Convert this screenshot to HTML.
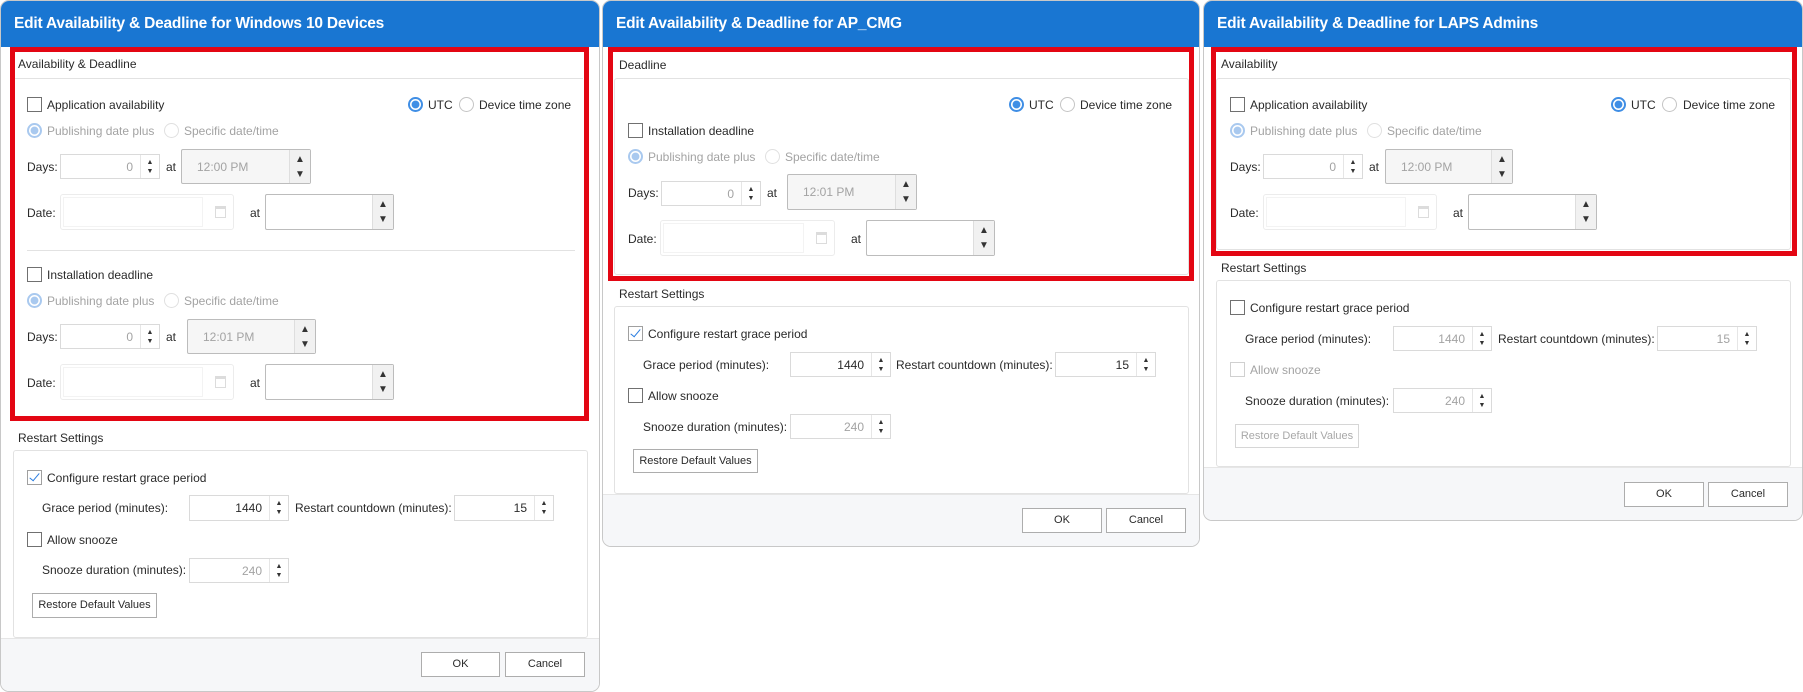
<!DOCTYPE html>
<html><head><meta charset="utf-8">
<style>
*{box-sizing:border-box;margin:0;padding:0}
body{width:1803px;height:692px;background:#fff;position:relative;overflow:hidden;font-family:"Liberation Sans",sans-serif}
.dlg{position:absolute;top:0;background:#fff;border:1px solid #c8c8c8;border-radius:9px;overflow:hidden}
.tb{position:absolute;left:0;top:0;right:0;height:46px;background:#1976d2}
.tt{position:absolute;left:13px;top:13px;color:#fff;font:bold 15.5px/19px "Liberation Sans",sans-serif;letter-spacing:-0.2px;white-space:nowrap}
.red{position:absolute;border:5px solid #e30613}
.ln{position:absolute;height:1px;background:#e2e2e2}
.grp{position:absolute;border:1px solid #e2e2e2;border-radius:3px}
.t{position:absolute;font-size:12px;line-height:14px;color:#2a2a2a;white-space:nowrap}
.g{color:#a3a3a3}
.cb{position:absolute;width:15px;height:15px;border:1px solid #707070;background:#fff}
.cb.dis{border-color:#d0d0d0}
.cb.on{border-color:#a0a0a0}
.cb.on::after{content:"";position:absolute;left:4px;top:0px;width:4px;height:9px;border:solid #2b7de0;border-width:0 1.6px 1.6px 0;transform:rotate(40deg)}
.rd{position:absolute;width:15px;height:15px;border:1px solid #c4c4c4;border-radius:50%;background:#fff}
.rd.on{border:2px solid #3f8ee5;background:radial-gradient(circle,#3f8ee5 0 3.6px,#fff 4.2px)}
.rd.don{border:2px solid #a9c9ef;background:radial-gradient(circle,#a9c9ef 0 3.6px,#fff 4.2px)}
.rd.dis{border-color:#e0e0e0}
.sp{position:absolute;border:1px solid #dadada;background:#fff}
.sp .v{position:absolute;right:26px;top:50%;transform:translateY(-50%);font-size:12px;color:#2a2a2a}
.sp .v.g{color:#a3a3a3}
.sp .ar{position:absolute;right:0;top:0;bottom:0;width:19px;border-left:1px solid #e6e6e6;font-size:7px;line-height:9px;text-align:center;color:#333;padding-top:3px}
.tm{position:absolute;border:1px solid #bcbcbc;background:#f6f6f6;border-radius:2px}
.tm .v{position:absolute;left:15px;top:50%;transform:translateY(-50%);font-size:12px;color:#a3a3a3}
.tm .ar{position:absolute;right:0;top:0;bottom:0;width:21px;border-left:1px solid #dedede;background:#f1f1f1;font-size:10px;line-height:15px;text-align:center;color:#333;padding-top:2px}
.dt{position:absolute;border:1px solid #ececec;border-radius:3px;background:#fff}
.dt .in{position:absolute;left:2px;top:2px;bottom:2px;right:30px;border:1px solid #f3f3f3}
.dt .ic{position:absolute;right:7px;top:50%;margin-top:-6px;width:11px;height:12px;border:1px solid #dcdcdc;border-top-width:3px}
.bt{position:absolute;border:1px solid #adadad;background:#fff;font-size:11px;color:#2a2a2a;text-align:center}
.bt.dis{border-color:#d6d6d6;color:#a8a8a8}
.ft{position:absolute;left:0;right:0;bottom:0;background:#f6f7f9;border-top:1px solid #e6e6e6}
</style></head><body>

<!-- Dialog 1 -->
<div class="dlg" style="left:0;width:600px;height:692px">
 <div class="tb"></div><div class="tt">Edit Availability &amp; Deadline for Windows 10 Devices</div>
 <div class="ln" style="left:14px;top:77px;width:568px"></div>
 <div class="t" style="left:17px;top:56px">Availability &amp; Deadline</div>
 <div class="cb" style="left:26px;top:96px"></div><div class="t" style="left:46px;top:97px">Application availability</div>
 <div class="rd on" style="left:407px;top:96px"></div><div class="t" style="left:427px;top:97px">UTC</div>
 <div class="rd" style="left:458px;top:96px"></div><div class="t" style="left:478px;top:97px">Device time zone</div>
 <div class="rd don" style="left:26px;top:122px"></div><div class="t g" style="left:46px;top:123px">Publishing date plus</div>
 <div class="rd dis" style="left:163px;top:122px"></div><div class="t g" style="left:183px;top:123px">Specific date/time</div>
 <div class="t" style="left:26px;top:159px">Days:</div>
 <div class="sp" style="left:59px;top:153px;width:100px;height:25px"><span class="v g">0</span><div class="ar">▲<br>▼</div></div>
 <div class="t" style="left:165px;top:159px">at</div>
 <div class="tm" style="left:180px;top:148px;width:130px;height:35px"><span class="v">12:00 PM</span><div class="ar">▲<br>▼</div></div>
 <div class="t" style="left:26px;top:205px">Date:</div>
 <div class="dt" style="left:59px;top:193px;width:174px;height:36px"><div class="in"></div><div class="ic"></div></div>
 <div class="t" style="left:249px;top:205px">at</div>
 <div class="tm" style="left:264px;top:193px;width:129px;height:36px;background:#fff"><div class="ar">▲<br>▼</div></div>
 <div class="ln" style="left:26px;top:249px;width:548px"></div>
 <div class="cb" style="left:26px;top:266px"></div><div class="t" style="left:46px;top:267px">Installation deadline</div>
 <div class="rd don" style="left:26px;top:292px"></div><div class="t g" style="left:46px;top:293px">Publishing date plus</div>
 <div class="rd dis" style="left:163px;top:292px"></div><div class="t g" style="left:183px;top:293px">Specific date/time</div>
 <div class="t" style="left:26px;top:329px">Days:</div>
 <div class="sp" style="left:59px;top:323px;width:100px;height:25px"><span class="v g">0</span><div class="ar">▲<br>▼</div></div>
 <div class="t" style="left:165px;top:329px">at</div>
 <div class="tm" style="left:186px;top:318px;width:129px;height:35px"><span class="v">12:01 PM</span><div class="ar">▲<br>▼</div></div>
 <div class="t" style="left:26px;top:375px">Date:</div>
 <div class="dt" style="left:59px;top:363px;width:174px;height:36px"><div class="in"></div><div class="ic"></div></div>
 <div class="t" style="left:249px;top:375px">at</div>
 <div class="tm" style="left:264px;top:363px;width:129px;height:36px;background:#fff"><div class="ar">▲<br>▼</div></div>
 <div class="red" style="left:9px;top:46px;width:579px;height:374px"></div>
 <div class="t" style="left:17px;top:430px">Restart Settings</div>
 <div class="grp" style="left:12px;top:449px;width:575px;height:188px"></div>
 <div class="cb on" style="left:26px;top:469px"></div><div class="t" style="left:46px;top:470px">Configure restart grace period</div>
 <div class="t" style="left:41px;top:500px">Grace period (minutes):</div>
 <div class="sp" style="left:188px;top:494px;width:100px;height:26px"><span class="v">1440</span><div class="ar">▲<br>▼</div></div>
 <div class="t" style="left:294px;top:500px">Restart countdown (minutes):</div>
 <div class="sp" style="left:453px;top:494px;width:100px;height:26px"><span class="v">15</span><div class="ar">▲<br>▼</div></div>
 <div class="cb" style="left:26px;top:531px"></div><div class="t" style="left:46px;top:532px">Allow snooze</div>
 <div class="t" style="left:41px;top:562px">Snooze duration (minutes):</div>
 <div class="sp" style="left:188px;top:557px;width:100px;height:25px"><span class="v g">240</span><div class="ar">▲<br>▼</div></div>
 <div class="bt" style="left:31px;top:592px;width:125px;height:25px;line-height:23px">Restore Default Values</div>
 <div class="ft" style="top:637px"></div>
 <div class="bt" style="left:420px;top:651px;width:79px;height:25px;line-height:23px">OK</div>
 <div class="bt" style="left:504px;top:651px;width:80px;height:25px;line-height:23px">Cancel</div>
</div>

<!-- Dialog 2 -->
<div class="dlg" style="left:602px;width:598px;height:547px">
 <div class="tb"></div><div class="tt">Edit Availability &amp; Deadline for AP_CMG</div>
 <div class="t" style="left:16px;top:57px">Deadline</div>
 <div class="grp" style="left:11px;top:77px;width:575px;height:197px"></div>
 <div class="rd on" style="left:406px;top:96px"></div><div class="t" style="left:426px;top:97px">UTC</div>
 <div class="rd" style="left:457px;top:96px"></div><div class="t" style="left:477px;top:97px">Device time zone</div>
 <div class="cb" style="left:25px;top:122px"></div><div class="t" style="left:45px;top:123px">Installation deadline</div>
 <div class="rd don" style="left:25px;top:148px"></div><div class="t g" style="left:45px;top:149px">Publishing date plus</div>
 <div class="rd dis" style="left:162px;top:148px"></div><div class="t g" style="left:182px;top:149px">Specific date/time</div>
 <div class="t" style="left:25px;top:185px">Days:</div>
 <div class="sp" style="left:58px;top:180px;width:100px;height:25px"><span class="v g">0</span><div class="ar">▲<br>▼</div></div>
 <div class="t" style="left:164px;top:185px">at</div>
 <div class="tm" style="left:184px;top:173px;width:130px;height:36px"><span class="v">12:01 PM</span><div class="ar">▲<br>▼</div></div>
 <div class="t" style="left:25px;top:231px">Date:</div>
 <div class="dt" style="left:57px;top:219px;width:175px;height:36px"><div class="in"></div><div class="ic"></div></div>
 <div class="t" style="left:248px;top:231px">at</div>
 <div class="tm" style="left:263px;top:219px;width:129px;height:36px;background:#fff"><div class="ar">▲<br>▼</div></div>
 <div class="red" style="left:5px;top:46px;width:586px;height:234px"></div>
 <div class="t" style="left:16px;top:286px">Restart Settings</div>
 <div class="grp" style="left:11px;top:305px;width:575px;height:188px"></div>
 <div class="cb on" style="left:25px;top:325px"></div><div class="t" style="left:45px;top:326px">Configure restart grace period</div>
 <div class="t" style="left:40px;top:357px">Grace period (minutes):</div>
 <div class="sp" style="left:187px;top:351px;width:101px;height:25px"><span class="v">1440</span><div class="ar">▲<br>▼</div></div>
 <div class="t" style="left:293px;top:357px">Restart countdown (minutes):</div>
 <div class="sp" style="left:452px;top:351px;width:101px;height:25px"><span class="v">15</span><div class="ar">▲<br>▼</div></div>
 <div class="cb" style="left:25px;top:387px"></div><div class="t" style="left:45px;top:388px">Allow snooze</div>
 <div class="t" style="left:40px;top:419px">Snooze duration (minutes):</div>
 <div class="sp" style="left:187px;top:413px;width:101px;height:25px"><span class="v g">240</span><div class="ar">▲<br>▼</div></div>
 <div class="bt" style="left:30px;top:448px;width:125px;height:24px;line-height:22px">Restore Default Values</div>
 <div class="ft" style="top:493px"></div>
 <div class="bt" style="left:419px;top:507px;width:80px;height:25px;line-height:23px">OK</div>
 <div class="bt" style="left:503px;top:507px;width:80px;height:25px;line-height:23px">Cancel</div>
</div>

<!-- Dialog 3 -->
<div class="dlg" style="left:1203px;width:600px;height:521px">
 <div class="tb"></div><div class="tt">Edit Availability &amp; Deadline for LAPS Admins</div>
 <div class="t" style="left:17px;top:56px">Availability</div>
 <div class="grp" style="left:12px;top:77px;width:575px;height:172px"></div>
 <div class="cb" style="left:26px;top:96px"></div><div class="t" style="left:46px;top:97px">Application availability</div>
 <div class="rd on" style="left:407px;top:96px"></div><div class="t" style="left:427px;top:97px">UTC</div>
 <div class="rd" style="left:458px;top:96px"></div><div class="t" style="left:479px;top:97px">Device time zone</div>
 <div class="rd don" style="left:26px;top:122px"></div><div class="t g" style="left:46px;top:123px">Publishing date plus</div>
 <div class="rd dis" style="left:163px;top:122px"></div><div class="t g" style="left:183px;top:123px">Specific date/time</div>
 <div class="t" style="left:26px;top:159px">Days:</div>
 <div class="sp" style="left:59px;top:153px;width:100px;height:25px"><span class="v g">0</span><div class="ar">▲<br>▼</div></div>
 <div class="t" style="left:165px;top:159px">at</div>
 <div class="tm" style="left:181px;top:148px;width:128px;height:35px"><span class="v">12:00 PM</span><div class="ar">▲<br>▼</div></div>
 <div class="t" style="left:26px;top:205px">Date:</div>
 <div class="dt" style="left:59px;top:193px;width:174px;height:36px"><div class="in"></div><div class="ic"></div></div>
 <div class="t" style="left:249px;top:205px">at</div>
 <div class="tm" style="left:264px;top:193px;width:129px;height:36px;background:#fff"><div class="ar">▲<br>▼</div></div>
 <div class="red" style="left:7px;top:46px;width:586px;height:209px"></div>
 <div class="t" style="left:17px;top:260px">Restart Settings</div>
 <div class="grp" style="left:12px;top:279px;width:575px;height:187px"></div>
 <div class="cb" style="left:26px;top:299px"></div><div class="t" style="left:46px;top:300px">Configure restart grace period</div>
 <div class="t" style="left:41px;top:331px">Grace period (minutes):</div>
 <div class="sp" style="left:189px;top:325px;width:99px;height:25px"><span class="v g">1440</span><div class="ar">▲<br>▼</div></div>
 <div class="t" style="left:294px;top:331px">Restart countdown (minutes):</div>
 <div class="sp" style="left:453px;top:325px;width:100px;height:25px"><span class="v g">15</span><div class="ar">▲<br>▼</div></div>
 <div class="cb dis" style="left:26px;top:361px"></div><div class="t g" style="left:46px;top:362px">Allow snooze</div>
 <div class="t" style="left:41px;top:393px">Snooze duration (minutes):</div>
 <div class="sp" style="left:189px;top:387px;width:99px;height:25px"><span class="v g">240</span><div class="ar">▲<br>▼</div></div>
 <div class="bt dis" style="left:31px;top:423px;width:124px;height:24px;line-height:22px">Restore Default Values</div>
 <div class="ft" style="top:466px"></div>
 <div class="bt" style="left:420px;top:481px;width:80px;height:25px;line-height:23px">OK</div>
 <div class="bt" style="left:504px;top:481px;width:80px;height:25px;line-height:23px">Cancel</div>
</div>
</body></html>
